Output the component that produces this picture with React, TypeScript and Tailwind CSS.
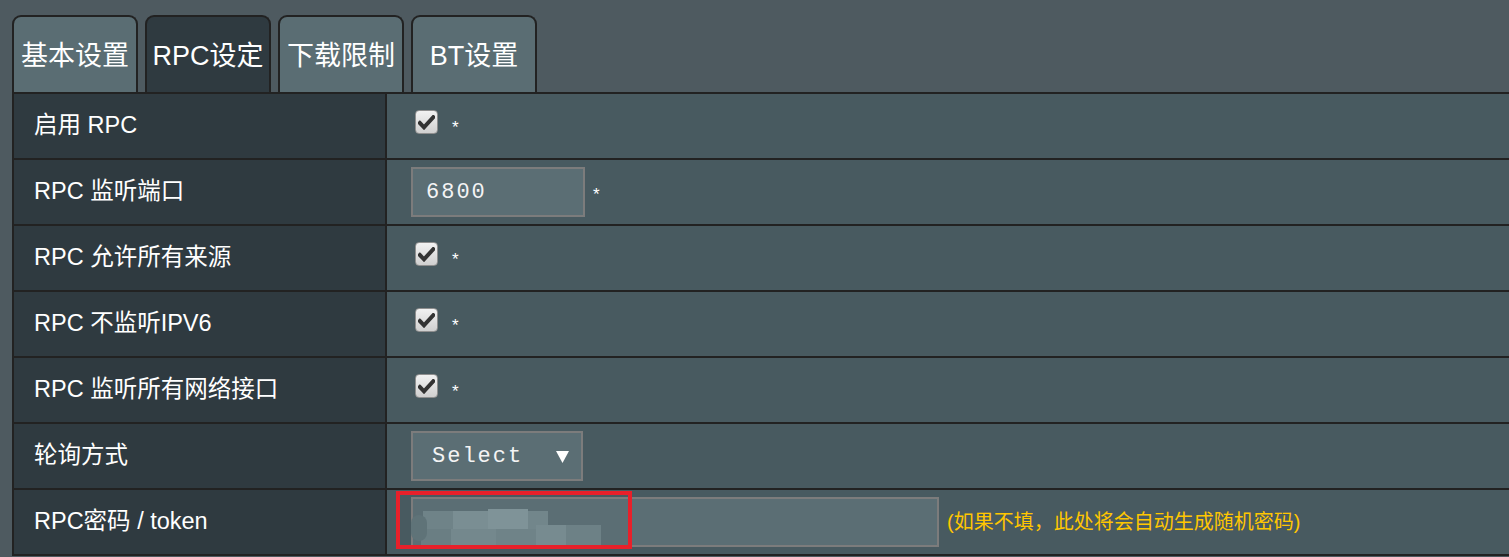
import React from "react";

const font = { fontFamily: '"Liberation Sans", Arial, "Noto Sans CJK SC", sans-serif' };

function Check() {
  return (
    <div className="relative -top-[4px] flex items-center gap-[14px]">
      <div className="w-[23px] h-[24px] rounded-[4px] border border-[#8f8f8f] bg-gradient-to-b from-[#f2f2f2] to-[#d0d0d0] flex items-center justify-center">
        <svg width="17" height="15" viewBox="0 0 17 15">
          <path d="M1.8 8 L6 12.3 L15.3 2.2" fill="none" stroke="#333" strokeWidth="4" strokeLinecap="square" />
        </svg>
      </div>
      <span className="text-white text-[17px] relative top-[6px]">*</span>
    </div>
  );
}

const mono = { fontFamily: '"Liberation Mono", "Courier New", monospace' };

const tabs = ["基本设置", "RPC设定", "下载限制", "BT设置"];

const blocks: [number, number, number, number, string][] = [
  [10, 12, 30, 18, "#6f8388"],
  [40, 12, 35, 18, "#7a8e93"],
  [75, 10, 40, 20, "#7f9398"],
  [115, 12, 20, 18, "#72868b"],
  [8, 30, 30, 16, "#6a7e83"],
  [38, 30, 45, 16, "#74888d"],
  [83, 30, 40, 16, "#6f8388"],
  [123, 26, 30, 20, "#778b90"],
  [153, 26, 35, 20, "#6d8186"],
];

export default function App() {
  return (
    <div className="w-[1509px] h-[557px] bg-[#4e5a60] overflow-hidden pt-[15px] pl-[12px]" style={font}>
      <div className="flex gap-[7px] h-[77px]">
        {tabs.map((t, i) => (
          <div
            key={t}
            className={`w-[126px] h-[79px] rounded-t-[9px] border-2 border-b-0 border-[#222] flex items-center justify-center text-white text-[27px] pt-[2px] ${
              i === 1 ? "bg-[#2f3a40]" : "bg-[#5a6d73]"
            }`}
          >
            {t}
          </div>
        ))}
      </div>
      <div className="relative grid grid-cols-[371px_1fr] gap-[2px] bg-[#222] border-2 border-[#222] w-[1499px]">
        {[
          ["启用 RPC", <Check />],
          [
            "RPC 监听端口",
            <div className="flex items-center gap-[8px]">
              <div className="w-[174px] h-[50px] border-2 border-[#7c7c7c] bg-[#5b6e74] flex items-center pl-[13px] text-[#f4f4f4] text-[22px] tracking-[2px]" style={mono}>
                6800
              </div>
              <span className="text-white text-[17px] relative top-[3px]">*</span>
            </div>,
          ],
          ["RPC 允许所有来源", <Check />],
          ["RPC 不监听IPV6", <Check />],
          ["RPC 监听所有网络接口", <Check />],
          [
            "轮询方式",
            <div className="w-[172px] h-[50px] border-2 border-[#7c7c7c] bg-[#5b6e74] flex items-center pl-[19px] pr-[12px] justify-between text-[#f4f4f4] text-[22px] tracking-[2px]" style={mono}>
              <span>Select</span>
              <svg width="13" height="13" viewBox="0 0 13 13">
                <polygon points="0,1 13,1 6.5,13" fill="#fff" />
              </svg>
            </div>,
          ],
          [
            "RPC密码 / token",
            <div className="flex items-center gap-[8px]">
              <div className="relative w-[528px] h-[50px] border-2 border-[#7c7c7c] bg-[#5b6e74]">
                {blocks.map(([x, y, w, h, c], k) => (
                  <div key={k} className="absolute" style={{ left: x, top: y, width: w, height: h, background: c }} />
                ))}
                <div className="absolute left-[-2px] top-[16px] w-[16px] h-[26px] rounded-full bg-[#5f7378]" />
                <div className="absolute left-[-17px] top-[-8px] w-[236px] h-[58px] border-[4px] border-[#e8202a]" />
              </div>
              <span className="text-[#ffc600] text-[20px]">(如果不填，此处将会自动生成随机密码)</span>
            </div>,
          ],
        ].map(([label, content], i) => (
          <React.Fragment key={i}>
            <div className="h-[64px] bg-[#2f3a40] flex items-center pl-[20px] text-white text-[23.5px]">{label}</div>
            <div className="h-[64px] bg-[#485a60] flex items-center pl-[24px]">
              {i === 0 || i === 2 || i === 3 || i === 4 ? <div className="pl-[4px]">{content}</div> : content}
            </div>
          </React.Fragment>
        ))}
      </div>
    </div>
  );
}
